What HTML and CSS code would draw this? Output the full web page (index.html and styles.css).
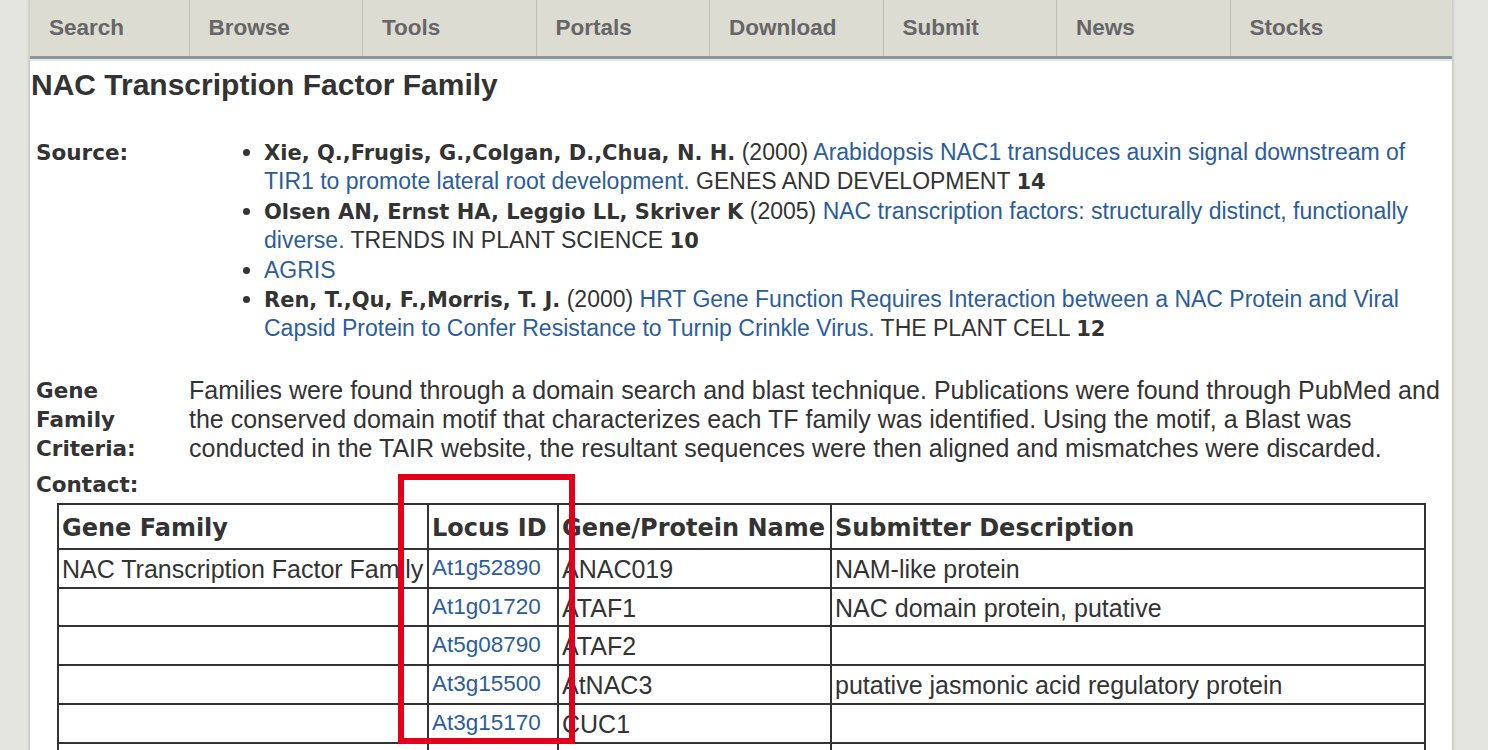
FILE: index.html
```html
<!DOCTYPE html>
<html lang="en">
<head>
<meta charset="utf-8">
<title>NAC Transcription Factor Family</title>
<link rel="stylesheet" href="styles.css">
</head>
<body>
<div class="page">
  <nav class="nav">
    <a class="nav-item w1" href="#">Search</a>
    <a class="nav-item" href="#">Browse</a>
    <a class="nav-item" href="#">Tools</a>
    <a class="nav-item" href="#">Portals</a>
    <a class="nav-item" href="#">Download</a>
    <a class="nav-item" href="#">Submit</a>
    <a class="nav-item" href="#">News</a>
    <a class="nav-item last" href="#">Stocks</a>
  </nav>
  <main class="content">
    <h1 class="title">NAC Transcription Factor Family</h1>
    <div class="info">
      <div class="label">Source:</div>
      <div class="value">
        <ul class="refs">
          <li><b>Xie, Q.,Frugis, G.,Colgan, D.,Chua, N. H.</b> (2000) <a href="#">Arabidopsis NAC1 transduces auxin signal downstream of TIR1 to promote lateral root development.</a> GENES AND DEVELOPMENT <b>14</b></li>
          <li><b>Olsen AN, Ernst HA, Leggio LL, Skriver K</b> (2005) <a href="#">NAC transcription factors: structurally distinct, functionally diverse.</a> TRENDS IN PLANT SCIENCE <b>10</b></li>
          <li><a href="#">AGRIS</a></li>
          <li><b>Ren, T.,Qu, F.,Morris, T. J.</b> (2000) <a href="#">HRT Gene Function Requires Interaction between a NAC Protein and Viral Capsid Protein to Confer Resistance to Turnip Crinkle Virus.</a> THE PLANT CELL <b>12</b></li>
        </ul>
      </div>
      <div class="label">Gene Family Criteria:</div>
      <div class="value text">Families were found through a domain search and blast technique. Publications were found through PubMed and the conserved domain motif that characterizes each TF family was identified. Using the motif, a Blast was conducted in the TAIR website, the resultant sequences were then aligned and mismatches were discarded.</div>
      <div class="label">Contact:</div>
      <div class="value"></div>
    </div>
    <div class="table-wrap">
      <table class="genes">
        <colgroup>
          <col class="c1"><col class="c2"><col class="c3"><col class="c4">
        </colgroup>
        <thead>
          <tr><th>Gene Family</th><th>Locus ID</th><th>Gene/Protein Name</th><th>Submitter Description</th></tr>
        </thead>
        <tbody>
          <tr><td>NAC Transcription Factor Family</td><td><a href="#">At1g52890</a></td><td>ANAC019</td><td>NAM-like protein</td></tr>
          <tr><td></td><td><a href="#">At1g01720</a></td><td>ATAF1</td><td>NAC domain protein, putative</td></tr>
          <tr><td></td><td><a href="#">At5g08790</a></td><td>ATAF2</td><td></td></tr>
          <tr><td></td><td><a href="#">At3g15500</a></td><td>AtNAC3</td><td>putative jasmonic acid regulatory protein</td></tr>
          <tr><td></td><td><a href="#">At3g15170</a></td><td>CUC1</td><td></td></tr>
          <tr><td></td><td><a href="#">At5g53950</a></td><td>CUC2</td><td></td></tr>
          <tr><td></td><td><a href="#">At1g76420</a></td><td>CUC3</td><td></td></tr>
        </tbody>
      </table>
      <div class="highlight"></div>
    </div>
  </main>
</div>
</body>
</html>
```

FILE: styles.css
```css
html, body {
  margin: 0;
  padding: 0;
}
body {
  background: #e5e5df;
  font-family: "Liberation Sans", Arial, sans-serif;
  color: #333;
  font-size: 23px;
}
.page {
  width: 1422px;
  margin-left: 30px;
  min-height: 750px;
  background: #fff;
  box-shadow: 0 0 3px 1px rgba(0, 0, 0, 0.18);
}
.nav {
  display: flex;
  height: 56px;
  background: #dcdcd3;
  border-bottom: 3px solid #8d979b;
  box-shadow: 0 2px 1px #e6e6e6;
}
.nav-item {
  box-sizing: border-box;
  width: 173.5px;
  padding-left: 19px;
  display: flex;
  align-items: center;
  border-right: 1px solid #c0c0b2;
  color: #666;
  font-weight: bold;
  font-size: 22.5px;
  text-decoration: none;
}
.nav-item.w1 {
  width: 159.5px;
}
.nav-item.last {
  flex: 1;
  border-right: none;
}
.content {
  padding: 9px 0 0 1px;
}
.title {
  margin: 0;
  font-size: 30px;
  line-height: 34px;
  font-weight: bold;
  color: #333;
}
.info {
  display: grid;
  grid-template-columns: 130px 1fr;
  column-gap: 23px;
  row-gap: 7px;
  margin: 36px 0 0 5px;
  padding-right: 4px;
  line-height: 29.4px;
}
.label {
  font-family: "DejaVu Sans", Verdana, sans-serif;
  font-weight: bold;
  font-size: 21.5px;
  line-height: 29px;
}
.value b {
  font-family: "DejaVu Sans", Verdana, sans-serif;
  font-size: 21px;
  line-height: 1;
}
.value.text {
  font-size: 25px;
  line-height: 29px;
}
a {
  color: #2b5d9e;
  text-decoration: none;
}
.refs {
  margin: 0 0 25px 0;
  padding-left: 75px;
}
.table-wrap {
  position: relative;
  margin: 4px 0 0 26px;
  width: 1369px;
}
.genes {
  width: 1369px;
  table-layout: fixed;
  border-collapse: collapse;
  border: 2px solid #333;
}
.c1 { width: 370px; }
.c2 { width: 130px; }
.c3 { width: 273px; }
.genes th, .genes td {
  border: 2px solid #333;
  text-align: left;
  white-space: nowrap;
  overflow: hidden;
}
.genes th {
  font-family: "DejaVu Sans", Verdana, sans-serif;
  font-size: 24px;
  font-weight: bold;
  line-height: 33px;
  padding: 7px 3px 3px;
}
.genes td {
  font-size: 25px;
  line-height: 28.8px;
  padding: 5px 3px 3px;
}
.genes td a {
  position: relative;
  top: -3px;
  font-size: 22.5px;
  line-height: 1;
}
.highlight {
  position: absolute;
  left: 341px;
  top: -29px;
  width: 165px;
  height: 258px;
  border: 6px solid #e2001a;
  pointer-events: none;
}
```
